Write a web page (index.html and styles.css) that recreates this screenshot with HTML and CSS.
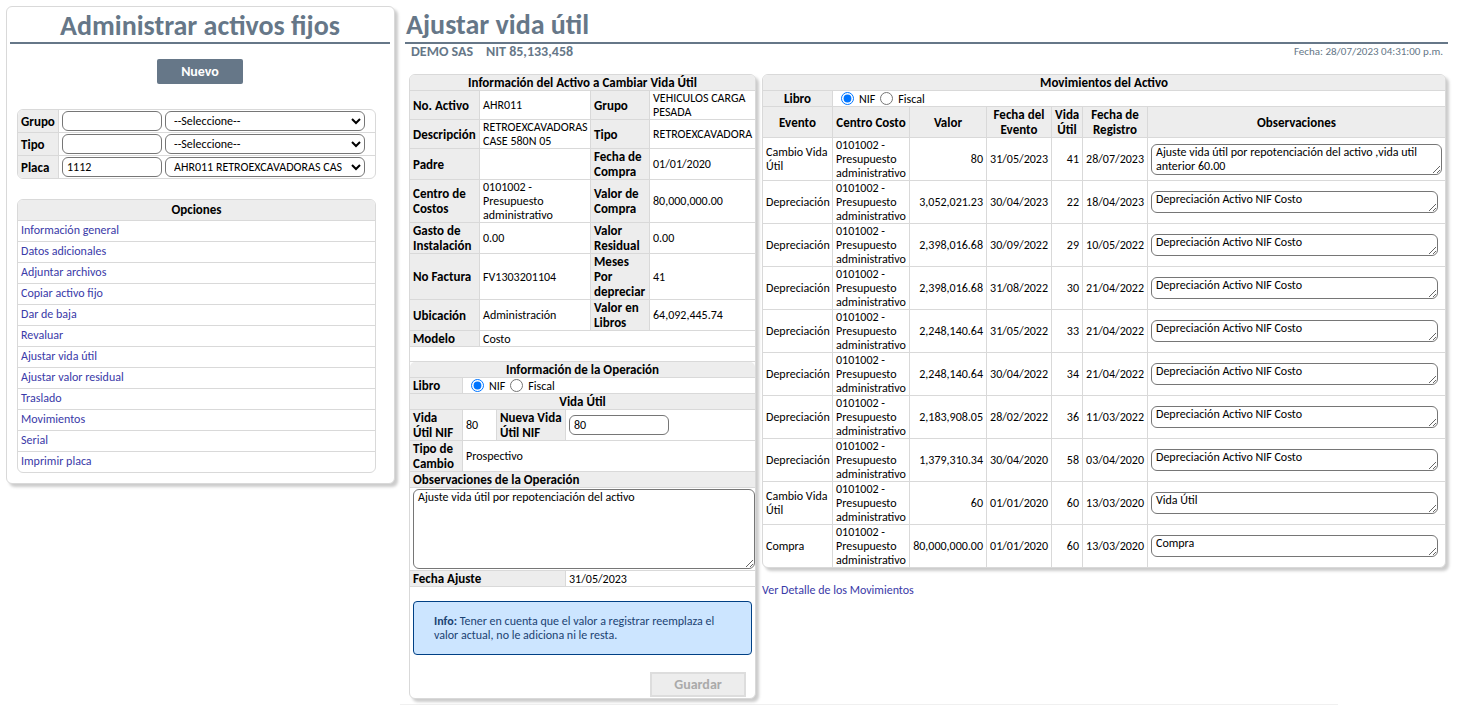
FILE: index.html
```html
<!DOCTYPE html>
<html lang="es">
<head>
<meta charset="utf-8">
<title>Administrar activos fijos</title>
<link rel="stylesheet" href="styles.css">
</head>
<body>
<div class="page">
  <aside class="card sidebar">
    <h1 class="title title-center">Administrar activos fijos</h1>
    <button class="btn-new" type="button">Nuevo</button>
    <form class="box filters">
      <table class="grid">
        <tr><th><label for="grupo">Grupo</label></th><td><div class="pair"><input id="grupo" class="field" type="text"><select class="field" aria-label="Lista de grupos"><option>--Seleccione--</option></select></div></td></tr>
        <tr><th><label for="tipo">Tipo</label></th><td><div class="pair"><input id="tipo" class="field" type="text"><select class="field" aria-label="Lista de tipos"><option>--Seleccione--</option></select></div></td></tr>
        <tr><th><label for="placa">Placa</label></th><td><div class="pair"><input id="placa" class="field" type="text" value="1112"><select class="field" aria-label="Lista de placas"><option>AHR011 RETROEXCAVADORAS CAS</option></select></div></td></tr>
      </table>
    </form>
    <nav class="box options">
      <h2>Opciones</h2>
      <a href="#">Información general</a>
      <a href="#">Datos adicionales</a>
      <a href="#">Adjuntar archivos</a>
      <a href="#">Copiar activo fijo</a>
      <a href="#">Dar de baja</a>
      <a href="#">Revaluar</a>
      <a href="#">Ajustar vida útil</a>
      <a href="#">Ajustar valor residual</a>
      <a href="#">Traslado</a>
      <a href="#">Movimientos</a>
      <a href="#">Serial</a>
      <a href="#">Imprimir placa</a>
    </nav>
  </aside>

  <main class="main">
    <h1 class="title">Ajustar vida útil</h1>
    <div class="subhead">
      <div class="company"><span>DEMO SAS</span><span>NIT 85,133,458</span></div>
      <div class="date">Fecha: 28/07/2023 04:31:00 p.m.</div>
    </div>
    <div class="content">
      <form class="card asset">
        <table class="grid asset-info">
          <colgroup><col class="a1"><col class="a2"><col class="a3"><col></colgroup>
          <tr><th class="head" colspan="4">Información del Activo a Cambiar Vida Útil</th></tr>
          <tr><th>No. Activo</th><td>AHR011</td><th>Grupo</th><td>VEHICULOS CARGA PESADA</td></tr>
          <tr><th>Descripción</th><td>RETROEXCAVADORAS<br>CASE 580N 05</td><th>Tipo</th><td>RETROEXCAVADORA</td></tr>
          <tr><th>Padre</th><td></td><th>Fecha de<br>Compra</th><td>01/01/2020</td></tr>
          <tr><th>Centro de<br>Costos</th><td>0101002 -<br>Presupuesto<br>administrativo</td><th>Valor de<br>Compra</th><td>80,000,000.00</td></tr>
          <tr><th>Gasto de<br>Instalación</th><td>0.00</td><th>Valor<br>Residual</th><td>0.00</td></tr>
          <tr><th>No Factura</th><td>FV1303201104</td><th>Meses<br>Por<br>depreciar</th><td>41</td></tr>
          <tr><th>Ubicación</th><td>Administración</td><th>Valor en<br>Libros</th><td>64,092,445.74</td></tr>
          <tr><th>Modelo</th><td colspan="3">Costo</td></tr>
          <tr><td colspan="4">&nbsp;</td></tr>
        </table>
        <table class="grid operation">
          <colgroup><col class="b1"><col class="b2"><col class="b3"><col></colgroup>
          <tr><th class="head" colspan="4">Información de la Operación</th></tr>
          <tr><th>Libro</th><td colspan="3"><div class="radios"><input type="radio" id="op-nif" name="op" checked><label for="op-nif">NIF</label><input type="radio" id="op-fiscal" name="op"><label for="op-fiscal">Fiscal</label></div></td></tr>
          <tr><th class="head" colspan="4">Vida Útil</th></tr>
          <tr><th>Vida<br>Útil NIF</th><td>80</td><th><label for="nueva">Nueva Vida<br>Útil NIF</label></th><td><input id="nueva" class="field" type="text" value="80"></td></tr>
          <tr><th>Tipo de<br>Cambio</th><td colspan="3">Prospectivo</td></tr>
          <tr><th colspan="4"><label for="obs">Observaciones de la Operación</label></th></tr>
          <tr><td class="notes" colspan="4"><textarea id="obs">Ajuste vida útil por repotenciación del activo</textarea></td></tr>
          <tr><th colspan="3">Fecha Ajuste</th><td>31/05/2023</td></tr>
        </table>
        <p class="info"><b>Info:</b> Tener en cuenta que el valor a registrar reemplaza el valor actual, no le adiciona ni le resta.</p>
        <button class="btn-save" type="submit" disabled>Guardar</button>
      </form>

      <section class="moves">
        <div class="card">
          <table class="grid move-table">
            <colgroup><col class="m1"><col class="m2"><col class="m2"><col class="m3"><col class="m4"><col class="m3"><col></colgroup>
            <tr><th colspan="7">Movimientos del Activo</th></tr>
            <tr><th>Libro</th><td colspan="6"><div class="radios"><input type="radio" id="mv-nif" name="mv" checked><label for="mv-nif">NIF</label><input type="radio" id="mv-fiscal" name="mv"><label for="mv-fiscal">Fiscal</label></div></td></tr>
            <tr><th>Evento</th><th>Centro Costo</th><th>Valor</th><th>Fecha del<br>Evento</th><th>Vida<br>Útil</th><th>Fecha de<br>Registro</th><th>Observaciones</th></tr>
            <tr><td>Cambio Vida<br>Útil</td><td>0101002 -<br>Presupuesto<br>administrativo</td><td class="num">80</td><td class="num">31/05/2023</td><td class="num">41</td><td class="num">28/07/2023</td><td><textarea class="tall" aria-label="Observaciones">Ajuste vida útil por repotenciación del activo ,vida util anterior 60.00</textarea></td></tr>
            <tr><td>Depreciación</td><td>0101002 -<br>Presupuesto<br>administrativo</td><td class="num">3,052,021.23</td><td class="num">30/04/2023</td><td class="num">22</td><td class="num">18/04/2023</td><td><textarea aria-label="Observaciones">Depreciación Activo NIF Costo</textarea></td></tr>
            <tr><td>Depreciación</td><td>0101002 -<br>Presupuesto<br>administrativo</td><td class="num">2,398,016.68</td><td class="num">30/09/2022</td><td class="num">29</td><td class="num">10/05/2022</td><td><textarea aria-label="Observaciones">Depreciación Activo NIF Costo</textarea></td></tr>
            <tr><td>Depreciación</td><td>0101002 -<br>Presupuesto<br>administrativo</td><td class="num">2,398,016.68</td><td class="num">31/08/2022</td><td class="num">30</td><td class="num">21/04/2022</td><td><textarea aria-label="Observaciones">Depreciación Activo NIF Costo</textarea></td></tr>
            <tr><td>Depreciación</td><td>0101002 -<br>Presupuesto<br>administrativo</td><td class="num">2,248,140.64</td><td class="num">31/05/2022</td><td class="num">33</td><td class="num">21/04/2022</td><td><textarea aria-label="Observaciones">Depreciación Activo NIF Costo</textarea></td></tr>
            <tr><td>Depreciación</td><td>0101002 -<br>Presupuesto<br>administrativo</td><td class="num">2,248,140.64</td><td class="num">30/04/2022</td><td class="num">34</td><td class="num">21/04/2022</td><td><textarea aria-label="Observaciones">Depreciación Activo NIF Costo</textarea></td></tr>
            <tr><td>Depreciación</td><td>0101002 -<br>Presupuesto<br>administrativo</td><td class="num">2,183,908.05</td><td class="num">28/02/2022</td><td class="num">36</td><td class="num">11/03/2022</td><td><textarea aria-label="Observaciones">Depreciación Activo NIF Costo</textarea></td></tr>
            <tr><td>Depreciación</td><td>0101002 -<br>Presupuesto<br>administrativo</td><td class="num">1,379,310.34</td><td class="num">30/04/2020</td><td class="num">58</td><td class="num">03/04/2020</td><td><textarea aria-label="Observaciones">Depreciación Activo NIF Costo</textarea></td></tr>
            <tr><td>Cambio Vida<br>Útil</td><td>0101002 -<br>Presupuesto<br>administrativo</td><td class="num">60</td><td class="num">01/01/2020</td><td class="num">60</td><td class="num">13/03/2020</td><td><textarea aria-label="Observaciones">Vida Útil</textarea></td></tr>
            <tr><td>Compra</td><td>0101002 -<br>Presupuesto<br>administrativo</td><td class="num">80,000,000.00</td><td class="num">01/01/2020</td><td class="num">60</td><td class="num">13/03/2020</td><td><textarea aria-label="Observaciones">Compra</textarea></td></tr>
          </table>
        </div>
        <a class="detail" href="#">Ver Detalle de los Movimientos</a>
      </section>
    </div>
    <hr class="rule">
  </main>
</div>
</body>
</html>
```
FILE: styles.css
```css
* { box-sizing: border-box; }
body {
  margin: 0;
  background: #fff;
  color: #000;
  font: 12px/14px Calibri, Carlito, Lato, sans-serif;
}
input, select, textarea, button { font: inherit; color: inherit; margin: 0; }
a { color: #3a3aa8; text-decoration: none; }

.page {
  display: grid;
  grid-template-columns: 389px 1fr;
  gap: 10px;
  padding: 6px 11px 0 6px;
  align-items: start;
}
.card {
  border: 1px solid #d9d9d9;
  border-radius: 6px;
  background: #fff;
  box-shadow: 3px 3px 3px #ccc;
}
.title {
  margin: 0;
  height: 37px;
  border-bottom: 2px solid #667788;
  color: #667788;
  font-size: 28px;
  line-height: 37px;
  font-weight: bold;
}
.title-center { text-align: center; }

/* Sidebar */
.sidebar { padding: 0 4px 10px 3px; }
.btn-new {
  display: block;
  width: 86px;
  height: 25px;
  margin: 15px auto 25px;
  border: 0;
  border-radius: 2px;
  background: #667788;
  color: #fff;
  font-size: 14px;
  font-weight: bold;
}
.box {
  border: 1px solid #d9d9d9;
  border-radius: 6px;
  overflow: hidden;
  margin: 0 14px 0 7px;
}
.options { margin-top: 20px; }
.options h2 {
  margin: 0;
  background: #ededed;
  text-align: center;
  font-size: 13px;
  line-height: 20px;
}
.options a {
  display: block;
  height: 21px;
  border-top: 1px solid #d9d9d9;
  padding: 0 3px;
  line-height: 19px;
}

/* Tables */
.grid { width: 100%; border-collapse: separate; border-spacing: 0; table-layout: fixed; }
.grid th, .grid td {
  padding: 0 3px;
  border-right: 1px solid #d9d9d9;
  border-bottom: 1px solid #d9d9d9;
  text-align: left;
}
.grid th {
  background: #ededed;
  font-size: 13px;
  line-height: 15px;
  white-space: nowrap;
}
.grid tr > :last-child { border-right: 0; }
.grid .head, .move-table th { text-align: center; }
.grid .num { text-align: right; padding-left: 0; white-space: nowrap; }
.grid tr:first-child th:first-child { border-top-left-radius: 5px; }
.grid tr:first-child th:last-child { border-top-right-radius: 5px; }

.filters th { width: 41px; }
.filters td { height: 23px; }
.filters tr:last-child td { height: 22px; }
.filters tr:last-child > *, .move-table tr:last-child > * { border-bottom: 0; }
.pair { display: flex; gap: 3px; }
.field {
  width: 100px;
  height: 20px;
  padding: 0 4px;
  border: 1px solid #767676;
  border-radius: 6px;
  background: #fff;
}
select.field { width: 200px; }

/* Main area */
.main > .title { height: 38px; padding-left: 1px; }
.subhead {
  display: flex;
  justify-content: space-between;
  padding: 0 5px 0 6px;
  margin-bottom: 15px;
  color: #667788;
  line-height: 15px;
}
.company { display: flex; gap: 13px; font-size: 14px; font-weight: bold; }
.date { font-size: 11px; }
.content {
  display: grid;
  grid-template-columns: 347px 1fr;
  gap: 6px;
  align-items: start;
  padding: 0 2px 5px 4px;
}
.rule {
  height: 1px;
  margin: 0 110px 0 -5px;
  border: 0;
  background: #f0f0f0;
}
.a1 { width: 70px; }
.a2 { width: 111px; }
.a3 { width: 59px; }
.b1 { width: 53px; }
.b2 { width: 34px; }
.b3 { width: 69px; }
.operation .head { border-radius: 0; }
.radios { display: flex; align-items: center; height: 15px; padding-left: 5px; gap: 5px; }
.radios input { width: 13px; height: 13px; }

textarea {
  display: block;
  width: calc(100% - 4px);
  height: 22px;
  padding: 0 4px;
  border: 1px solid #767676;
  border-radius: 6px;
  background: #fff;
  overflow: hidden;
}
textarea.tall { width: 100%; height: 31px; }
.grid .notes { padding: 1px 0 1px 3px; }
.notes textarea { width: 100%; height: 80px; }
.info {
  margin: 14px 3px 17px;
  padding: 12px 20px;
  border: 1px solid #004085;
  border-radius: 4px;
  background: #cce5ff;
  color: #1b4373;
}
.btn-save {
  display: block;
  width: 96px;
  height: 25px;
  margin: 0 9px 1px auto;
  border: 2px solid #ddd;
  background: #ededed;
  color: #aaa;
  font-size: 14px;
  font-weight: bold;
}

.m1 { width: 70px; }
.m2 { width: 77px; }
.m3 { width: 65px; }
.m4 { width: 31px; }
.detail { display: inline-block; margin-top: 15px; }
```
